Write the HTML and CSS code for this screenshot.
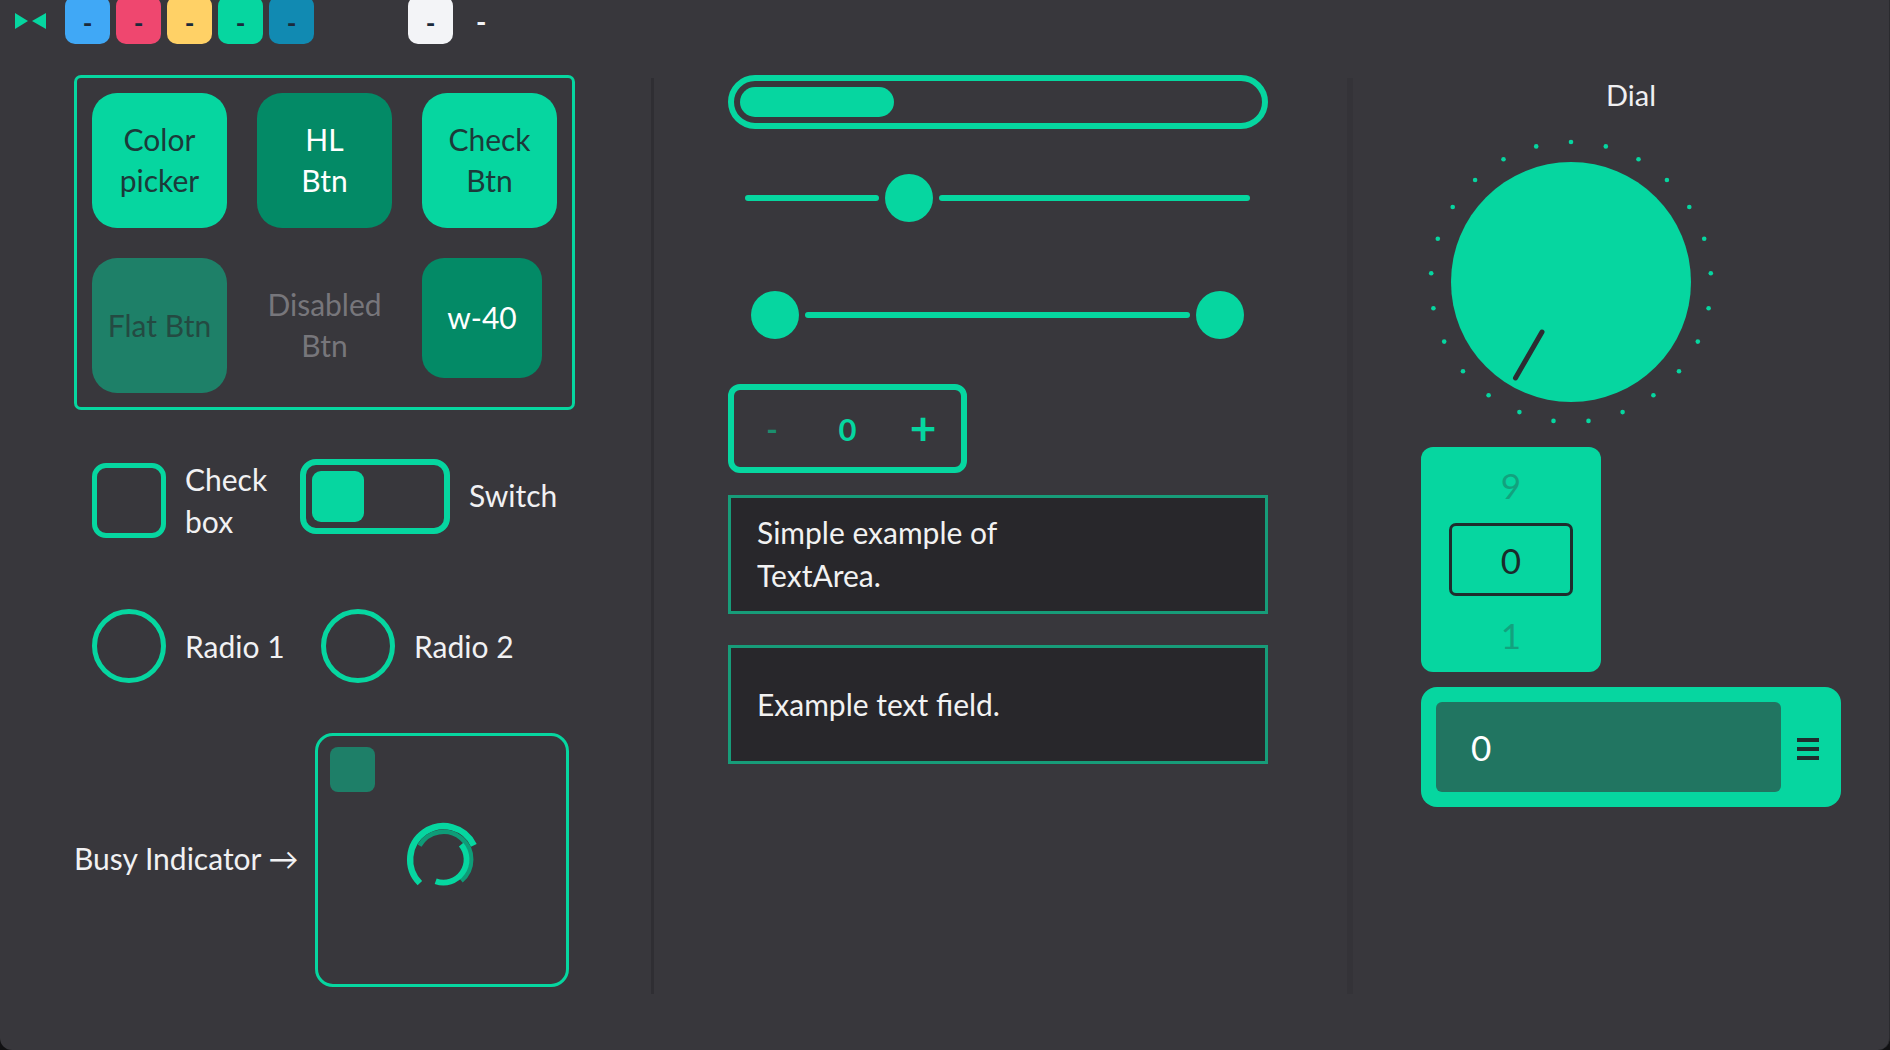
FILE: index.html
```html
<!DOCTYPE html>
<html lang="en">
<head>
<meta charset="utf-8">
<title>Controls Gallery</title>
<link rel="stylesheet" href="styles.css">
</head>
<body>
<div class="app">
  <header class="topbar">
    <svg class="bowtie" width="31" height="16" viewBox="0 0 31 16">
      <polygon points="0,0 0,16 13,8" fill="#06d6a0"/>
      <polygon points="31,0 31,16 17,8" fill="#06d6a0"/>
    </svg>
    <div class="swatches">
      <div class="sw sw-blue">-</div>
      <div class="sw sw-red">-</div>
      <div class="sw sw-yellow">-</div>
      <div class="sw sw-green">-</div>
      <div class="sw sw-teal">-</div>
    </div>
    <div class="sw sw-white">-</div>
    <span class="top-dash">-</span>
  </header>

  <main class="content">
    <section class="col col-left">
      <div class="btn-box">
        <div class="btn btn-light">Color<br>picker</div>
        <div class="btn btn-dark">HL<br>Btn</div>
        <div class="btn btn-light">Check<br>Btn</div>
        <div class="btn btn-flat">Flat Btn</div>
        <div class="btn btn-disabled">Disabled<br>Btn</div>
        <div class="btn btn-dark btn-w40">w-40</div>
      </div>

      <div class="opt-row check-row">
        <div class="opt opt-check">
          <div class="checkbox"></div>
          <div class="opt-label two-line">Check<br>box</div>
        </div>
        <div class="opt">
          <div class="switch"><div class="knob"></div></div>
          <div class="opt-label switch-label">Switch</div>
        </div>
      </div>

      <div class="opt-row radio-row">
        <div class="opt opt-radio1">
          <div class="radio"></div>
          <div class="opt-label">Radio 1</div>
        </div>
        <div class="opt">
          <div class="radio"></div>
          <div class="opt-label">Radio 2</div>
        </div>
      </div>

      <div class="busy-row">
        <div class="busy-label">Busy Indicator →</div>
        <div class="busy-box">
          <div class="busy-square"></div>
          <svg class="spinner" width="83" height="83" viewBox="-36 -36 72 72">
            <path d="M -20.5 20.5 A 29 29 0 1 1 26.3 -12.3" fill="none" stroke="#06d6a0" stroke-width="5.5"/>
            <path d="M -20.8 -12 A 24 24 0 1 1 15.4 18.4" fill="none" stroke="#0e9c78" stroke-width="4"/>
            <path d="M 15.3 -12.9 A 20 20 0 0 1 -6.8 18.8" fill="none" stroke="#06d6a0" stroke-width="5"/>
          </svg>
        </div>
      </div>
    </section>

    <div class="sep"></div>

    <section class="col col-mid">
      <div class="progress"><div class="progress-fill"></div></div>

      <div class="slider">
        <div class="track track-left"></div>
        <div class="handle"></div>
        <div class="track track-right"></div>
      </div>

      <div class="range">
        <div class="handle"></div>
        <div class="track track-mid"></div>
        <div class="handle"></div>
      </div>

      <div class="spinbox">
        <span class="spin-minus">-</span>
        <span class="spin-value">0</span>
        <span class="spin-plus">+</span>
      </div>

      <div class="textarea">Simple example of<br>TextArea.</div>

      <div class="textfield">Example text field.</div>
    </section>

    <div class="sep sep-soft"></div>

    <section class="col col-right">
      <div class="dial-label">Dial</div>
      <svg class="dial" width="300" height="300" viewBox="0 0 300 300">
        <circle cx="150" cy="150" r="120" fill="#06d6a0"/>
        <g fill="#06d6a0">
          <circle cx="150.0" cy="10.0" r="2.3"/>
          <circle cx="184.8" cy="14.4" r="2.3"/>
          <circle cx="217.5" cy="27.3" r="2.3"/>
          <circle cx="245.9" cy="48.0" r="2.3"/>
          <circle cx="268.3" cy="75.0" r="2.3"/>
          <circle cx="283.2" cy="106.7" r="2.3"/>
          <circle cx="289.8" cy="141.2" r="2.3"/>
          <circle cx="287.6" cy="176.2" r="2.3"/>
          <circle cx="276.8" cy="209.6" r="2.3"/>
          <circle cx="258.0" cy="239.2" r="2.3"/>
          <circle cx="232.4" cy="263.2" r="2.3"/>
          <circle cx="201.6" cy="280.1" r="2.3"/>
          <circle cx="167.5" cy="288.9" r="2.3"/>
          <circle cx="132.5" cy="288.9" r="2.3"/>
          <circle cx="98.4" cy="280.1" r="2.3"/>
          <circle cx="67.6" cy="263.2" r="2.3"/>
          <circle cx="42.0" cy="239.2" r="2.3"/>
          <circle cx="23.2" cy="209.6" r="2.3"/>
          <circle cx="12.4" cy="176.2" r="2.3"/>
          <circle cx="10.2" cy="141.2" r="2.3"/>
          <circle cx="16.8" cy="106.7" r="2.3"/>
          <circle cx="31.7" cy="75.0" r="2.3"/>
          <circle cx="54.1" cy="48.0" r="2.3"/>
          <circle cx="82.5" cy="27.3" r="2.3"/>
          <circle cx="115.2" cy="14.4" r="2.3"/>
        </g>
        <line x1="121" y1="200" x2="94.5" y2="246" stroke="#2c2c32" stroke-width="5" stroke-linecap="round"/>
      </svg>

      <div class="tumbler">
        <div class="tumbler-item">9</div>
        <div class="tumbler-current">0</div>
        <div class="tumbler-item">1</div>
      </div>

      <div class="combo">
        <div class="combo-field">0</div>
        <svg class="combo-icon" width="22" height="22" viewBox="0 0 22 22">
          <rect x="0" y="0" width="22" height="4" fill="#1f2d2e"/>
          <rect x="0" y="9" width="22" height="4" fill="#1f2d2e"/>
          <rect x="0" y="18" width="22" height="4" fill="#1f2d2e"/>
        </svg>
      </div>
    </section>
  </main>
</div>
</body>
</html>
```

FILE: styles.css
```css
html, body {
  margin: 0;
  padding: 0;
  background: #111113;
}

body {
  font-family: Lato, "Noto Sans", sans-serif;
  color: #f1f1f3;
}

.app {
  width: 1890px;
  height: 1050px;
  background: #38373c;
  border-radius: 0 0 12px 12px;
  overflow: hidden;
  display: flex;
  flex-direction: column;
  box-sizing: border-box;
  border-right: 1px solid #2a2a2e;
}

/* ---------- top bar ---------- */
.topbar {
  height: 44px;
  flex: none;
  display: flex;
  align-items: flex-start;
  padding-left: 15px;
}

.bowtie {
  margin-top: 13px;
  flex: none;
}

.swatches {
  display: flex;
  gap: 6px;
  margin-left: 19px;
}

.sw {
  width: 45px;
  height: 48px;
  margin-top: -4px;
  border-radius: 10px;
  display: flex;
  justify-content: center;
  align-items: center;
  padding-top: 6px;
  box-sizing: border-box;
  font-size: 26px;
  font-weight: 700;
  color: #1b2a3b;
  line-height: 1;
}

.sw-blue { background: #40a8f6; }
.sw-red { background: #ef476f; }
.sw-yellow { background: #ffd166; }
.sw-green { background: #06d6a0; }
.sw-teal { background: #118ab2; }
.sw-white { background: #f3f4f7; margin-left: 94px; }

.top-dash {
  margin-left: 23px;
  margin-top: 7px;
  font-size: 28px;
  font-weight: 700;
  color: #f3f4f7;
  line-height: 1;
}

/* ---------- layout ---------- */
.content {
  display: flex;
  align-items: flex-start;
  padding: 31px 0 0 74px;
}

.col {
  display: flex;
  flex-direction: column;
  flex: none;
}

.col-left { width: 501px; }

.sep {
  flex: none;
  width: 3px;
  height: 916px;
  margin-top: 3px;
  margin-left: 76px;
  background: #2f2e33;
}

.sep-soft {
  margin-left: 79px;
  width: 6px;
  background: #343338;
}

.col-mid {
  width: 540px;
  margin-left: 74px;
}

.col-right {
  width: 420px;
  margin-left: 68px;
}

/* ---------- buttons grid ---------- */
.btn-box {
  height: 335px;
  box-sizing: border-box;
  border: 3px solid #06d6a0;
  border-radius: 7px;
  padding: 15px 15px 14px;
  display: grid;
  grid-template-columns: repeat(3, 135px);
  grid-template-rows: 135px 135px;
  column-gap: 30px;
  row-gap: 30px;
}

.btn {
  height: 135px;
  border-radius: 25px;
  display: flex;
  align-items: center;
  justify-content: center;
  text-align: center;
  font-size: 30px;
  line-height: 41px;
  padding-bottom: 1px;
  box-sizing: border-box;
}

.btn-light { background: #06d6a0; color: #1c3a3a; }
.btn-dark { background: #038a66; color: #ffffff; }
.btn-flat { background: #1e8068; color: #244a42; }
.btn-disabled { color: #77767b; }

.btn-w40 {
  width: 120px;
  height: 120px;
  border-radius: 22px;
}

/* ---------- check / switch / radio ---------- */
.opt-row {
  display: flex;
  align-items: flex-start;
  padding-left: 18px;
}

.check-row {
  margin-top: 49px;
  height: 75px;
}

.radio-row {
  margin-top: 75px;
  height: 74px;
}

.opt {
  display: flex;
  align-items: center;
  gap: 19px;
  font-size: 30px;
  line-height: 40px;
}

.opt-check {
  width: 208px;
  align-items: flex-start;
}

.opt-radio1 { width: 229px; }

.opt-label { white-space: nowrap; }

.switch-label { margin-top: -3px; }

.two-line {
  line-height: 42px;
  margin-top: -1px;
}

.checkbox {
  width: 74px;
  height: 75px;
  margin-top: 4px;
  box-sizing: border-box;
  border: 5px solid #06d6a0;
  border-radius: 14px;
}

.switch {
  width: 150px;
  height: 75px;
  box-sizing: border-box;
  border: 6px solid #06d6a0;
  border-radius: 16px;
  padding: 6px;
}

.knob {
  width: 52px;
  height: 51px;
  background: #06d6a0;
  border-radius: 9px;
}

.radio {
  width: 74px;
  height: 74px;
  box-sizing: border-box;
  border: 5px solid #06d6a0;
  border-radius: 50%;
}

/* ---------- busy ---------- */
.busy-row {
  margin-top: 50px;
  display: flex;
  align-items: center;
}

.busy-label {
  width: 241px;
  font-size: 30px;
  line-height: 40px;
  margin-top: -4px;
  white-space: nowrap;
}

.busy-box {
  width: 254px;
  height: 254px;
  box-sizing: border-box;
  border: 3px solid #06d6a0;
  border-radius: 18px;
  display: grid;
}

.busy-square {
  grid-area: 1 / 1;
  justify-self: start;
  align-self: start;
  width: 45px;
  height: 45px;
  margin: 11px 0 0 12px;
  background: #1e7f68;
  border-radius: 8px;
}

.spinner {
  grid-area: 1 / 1;
  justify-self: center;
  align-self: center;
  margin: 0 0 2px 3px;
}

/* ---------- middle column ---------- */
.progress {
  height: 54px;
  box-sizing: border-box;
  border: 6px solid #06d6a0;
  border-radius: 27px;
  padding: 6px;
}

.progress-fill {
  width: 154px;
  height: 30px;
  border-radius: 15px;
  background: #06d6a0;
}

.slider {
  margin-top: 45px;
  height: 48px;
  display: flex;
  align-items: center;
  padding: 0 18px 0 17px;
}

.track {
  height: 6px;
  border-radius: 3px;
  background: #06d6a0;
}

.track-left { width: 134px; margin-right: 6px; }
.track-right { flex: 1; margin-left: 6px; }

.handle {
  flex: none;
  width: 48px;
  height: 48px;
  border-radius: 50%;
  background: #06d6a0;
}

.range {
  margin-top: 69px;
  height: 48px;
  display: flex;
  align-items: center;
  padding: 0 24px 0 23px;
}

.track-mid { flex: 1; margin: 0 6px; }

.spinbox {
  margin-top: 45px;
  width: 239px;
  height: 89px;
  box-sizing: border-box;
  border: 6px solid #06d6a0;
  border-radius: 12px;
  display: grid;
  grid-template-columns: 76px 75px 76px;
  align-items: center;
  justify-items: center;
  color: #06d6a0;
  font-size: 31px;
  line-height: 40px;
}

.spin-minus { color: #1b8e6e; font-weight: 700; }
.spin-value { font-weight: 700; }
.spin-plus { font-size: 46px; font-weight: 700; margin-top: -2px; }

.textarea,
.textfield {
  height: 119px;
  box-sizing: border-box;
  border: 3px solid #179c79;
  background: #28272b;
  padding-left: 26px;
  font-size: 30px;
  line-height: 43px;
  color: #f2f2f2;
}

.textarea {
  margin-top: 22px;
  padding-top: 13px;
}

.textfield {
  margin-top: 31px;
  display: flex;
  align-items: center;
}

/* ---------- right column ---------- */
.dial-label {
  margin-top: 0;
  text-align: center;
  font-size: 29px;
  line-height: 40px;
  color: #f0f0f2;
}

.dial {
  display: block;
  margin-top: 17px;
}

.tumbler {
  margin-top: 15px;
  width: 180px;
  height: 225px;
  box-sizing: border-box;
  background: #06d6a0;
  border-radius: 12px;
  padding-top: 18px;
  display: flex;
  flex-direction: column;
  align-items: center;
  font-size: 35px;
  line-height: 40px;
}

.tumbler-item { color: #12a27e; height: 40px; }

.tumbler-current {
  width: 124px;
  height: 73px;
  margin: 18px 0 19px;
  box-sizing: border-box;
  border: 3px solid #1f2d2d;
  border-radius: 7px;
  display: flex;
  align-items: center;
  justify-content: center;
  color: #1b2a2a;
}

.combo {
  margin-top: 15px;
  width: 420px;
  height: 120px;
  box-sizing: border-box;
  background: #06d6a0;
  border-radius: 16px;
  padding: 15px;
  display: flex;
  align-items: center;
}

.combo-field {
  width: 345px;
  height: 90px;
  box-sizing: border-box;
  background: #217561;
  border-radius: 6px;
  padding-left: 35px;
  display: flex;
  align-items: center;
  font-size: 35px;
  color: #ffffff;
}

.combo-icon {
  margin-left: 16px;
  margin-top: 4px;
  flex: none;
}
```
